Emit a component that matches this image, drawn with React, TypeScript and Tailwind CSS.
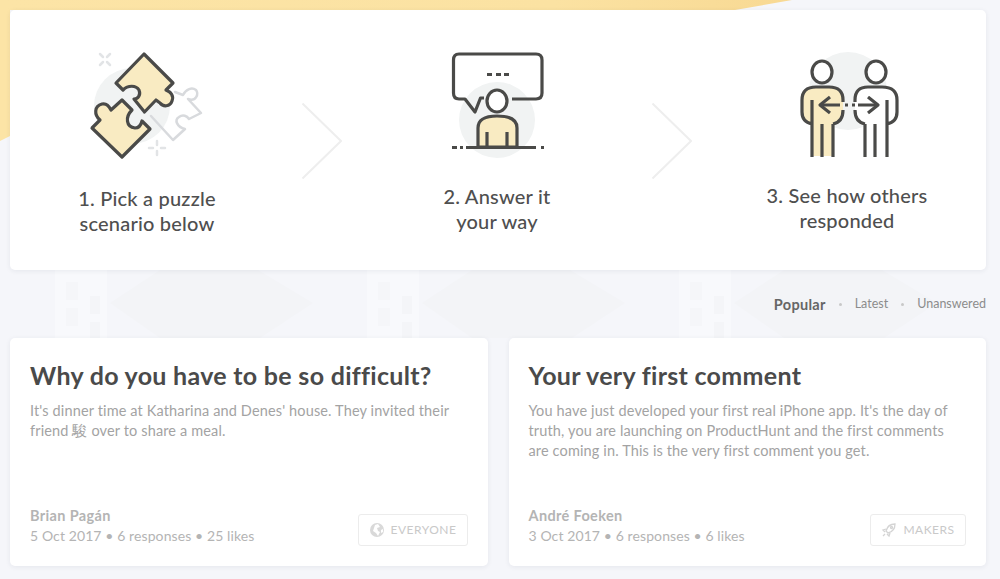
const FONT = "font-['Lato',sans-serif]";
const S = "#4a4a48";

function PageBackdrop() {
  return (
    <svg className="absolute inset-0" width="1000" height="579" viewBox="0 0 1000 579">
      <defs>
        <linearGradient id="sun" x1="0" x2="1" y1="0" y2="0">
          <stop offset="0" stopColor="#fce4a6" />
          <stop offset="0.7" stopColor="#fbe2a2" />
          <stop offset="1" stopColor="#f8d993" />
        </linearGradient>
      </defs>
      {[0, 312, 624].map((x) => (
        <g key={x} transform={`translate(${x} 0)`}>
          <polygon points="110,303 160,270 258,270 313,303 260,338 160,338" fill="#f3f4f7" />
          <rect x="55" y="270" width="52" height="68" fill="#f8f9fc" />
          <rect x="66" y="282" width="12" height="18" fill="#f5f6f9" />
          <rect x="90" y="296" width="10" height="18" fill="#f4f5f8" />
          <rect x="66" y="308" width="12" height="18" fill="#f5f6f9" />
          <rect x="90" y="322" width="10" height="16" fill="#f4f5f8" />
        </g>
      ))}
      <polygon points="0,0 792,0 735,10 10,10 10,136 0,141" fill="url(#sun)" />
    </svg>
  );
}

function PuzzleIcon() {
  return (
    <svg width="130" height="120" viewBox="82 45 130 120" fill="none" strokeLinejoin="round" strokeLinecap="round">
      <circle cx="132" cy="106" r="38" fill="#f1f3f3" />
      <g stroke="#e2e4e6" strokeWidth="2.500">
        <path d="M100 54l3 3M110 54l-3 3M100 65l3-3M110 65l-3-3" />
        <path d="M157 141v4M157 151v4M149 148h4M161 148h4" />
      </g>
      <path
        d="M151 116L173 140L185 129C177 127 174 120 179 117C183 114 187 116 189 119L201 113L188 99C196 102 199 94 196 90C192 87 186 89 183 95L175 92"
        stroke="#d8dadd"
        strokeWidth="2.500"
      />
      <path
        d="M144 54L173 83L166 90C171 92 174 96 172 101C170 107 163 107 160 103L156 100L144.500 112L134 99C138 99 141 95 139 90C136 85 128 85 123 90L116 83Z"
        fill="#f9ebc2"
        stroke={S}
        strokeWidth="3.200"
      />
      <path
        d="M92 128L100 120C94 115 94 106 102 104C106 103 109 106 111 110L122 100L132 110C125 117 126 127 135 128C139 128 141 125 142 121L150 129L122 157Z"
        fill="#f9ebc2"
        stroke={S}
        strokeWidth="3.200"
      />
    </svg>
  );
}

function SpeechIcon() {
  return (
    <svg width="130" height="120" viewBox="432 45 130 120" fill="none" strokeLinejoin="round">
      <circle cx="497" cy="120" r="38" fill="#f1f3f3" />
      <path
        d="M484 98H480.500L475 112L465 99H459Q453.500 99 453.500 93V60Q453.500 54 459 54H536Q542 54 542 60V93Q542 99 536 99H512"
        stroke={S}
        strokeWidth="3.200"
      />
      <rect x="487" y="73" width="5" height="3" fill={S} />
      <rect x="496" y="73" width="5" height="3" fill={S} />
      <rect x="504" y="73" width="5" height="3" fill={S} />
      <ellipse cx="497" cy="101" rx="10" ry="11" fill="#fff" stroke={S} strokeWidth="3.200" />
      <path d="M478 147V128Q478 116 497 116Q517 116 517 128V147Z" fill="#f9ebc2" stroke={S} strokeWidth="3.200" />
      <path d="M487 132V147M507 132V147" stroke={S} strokeWidth="3.200" />
      <path d="M466 147.500H536" stroke={S} strokeWidth="3.200" />
      <path d="M452 147.500H457M460 147.500H463M541 147.500H544" stroke={S} strokeWidth="3.200" />
    </svg>
  );
}

function PeopleIcon() {
  return (
    <svg width="130" height="120" viewBox="782 45 130 120" fill="none" strokeLinejoin="round">
      <circle cx="848" cy="91" r="39" fill="#f1f3f3" />
      <ellipse cx="822" cy="72" rx="10" ry="11" fill="#fff" stroke={S} strokeWidth="3.200" />
      <ellipse cx="876" cy="72" rx="10" ry="11" fill="#fff" stroke={S} strokeWidth="3.200" />
      <path
        d="M812 156V124Q802 122 802 112V100Q802 87 816 87H829Q843 87 843 100V112Q843 122 833 124V156Z"
        fill="#f9ebc2"
      />
      <path
        d="M855 100Q855 87 868 87H882Q897 87 897 100V112Q897 122 887 124V156H865V124Q855 122 855 110Z"
        fill="#fff"
      />
      <path
        d="M812 100V157M833 124V157M822 124V157M812 124Q802 122 802 112V100Q802 87 816 87H829Q843 87 843 100V102M843 110Q843 122 833 124"
        stroke={S}
        strokeWidth="3.200"
      />
      <path
        d="M855 102V100Q855 87 868 87H882Q897 87 897 100V112Q897 122 887 124M855 110Q855 122 865 124M887 100V157M865 124V157M875 124V157"
        stroke={S}
        strokeWidth="3.200"
      />
      <path d="M820 105H840M845 105H848M852 105H855M858 105H877" stroke={S} strokeWidth="3.200" />
      <path d="M830 97L820 105L830 113M868 97L878 105L868 113" stroke={S} strokeWidth="3.200" />
    </svg>
  );
}

function Chevron() {
  return (
    <svg className="mx-[20px] mt-[58px] shrink-0" width="40" height="76" viewBox="0 0 40 76" fill="none">
      <path d="M0.500 0.500L39 38L0.500 75.500" stroke="#eeeeee" strokeWidth="2" />
    </svg>
  );
}

function Step({ icon, line1, line2, top }: { icon: React.ReactNode; line1: string; line2: string; top: string }) {
  return (
    <div className="flex w-[270px] shrink-0 flex-col items-center">
      {icon}
      <div className={`${top} text-center text-[20px] leading-[25px] font-medium tracking-[0.2px] text-[#4f4f4f]`}>
        <div>{line1}</div>
        <div>{line2}</div>
      </div>
    </div>
  );
}

function Globe() {
  return (
    <svg width="16" height="16" viewBox="0 0 16 16">
      <circle cx="8" cy="8" r="7" fill="#d9d9d9" />
      <path d="M6 3l3-1 2 3-3 1 1 3 2 1-2 4-2-3-3-2 1-3zM12 8l2-1 0 3-2 1z" fill="#ffffff" />
    </svg>
  );
}

function Rocket() {
  return (
    <svg width="16" height="16" viewBox="0 0 16 16" fill="none" stroke="#d4d4d4" strokeWidth="1.300">
      <path d="M14 2C9 2 6 5 5 9l2 2c4-1 7-4 7-9z" />
      <path d="M5 7L2 8l2 2M9 11l-1 3-2-2M4 12l-2 2" />
      <circle cx="10.500" cy="5.500" r="1" />
    </svg>
  );
}

function Card({
  title,
  body,
  author,
  meta,
  badge,
  badgeIcon,
  badgeW,
}: {
  title: string;
  body: string;
  author: string;
  meta: string;
  badge: string;
  badgeIcon: React.ReactNode;
  badgeW: string;
}) {
  return (
    <div className="flex h-[228px] flex-col rounded-[5px] bg-white px-[20px] pt-[20px] pb-[20px] shadow-[0_1px_5px_rgba(40,50,80,0.08)]">
      <h2 className="text-[25px] leading-[34px] font-bold tracking-[0.3px] text-[#4a4a4a]">{title}</h2>
      <p className="mt-[9px] text-[14.500px] leading-[20px] tracking-[0.14px] text-[#a3a3a3]">{body}</p>
      <div className="mt-auto flex items-end justify-between">
        <div className="text-[14px] leading-[20px] tracking-[0.1px] text-[#b4b4b4]">
          <div className="text-[14.500px] font-bold tracking-[0.35px]">{author}</div>
          <div>{meta}</div>
        </div>
        <div
          className={`${badgeW} flex h-[32px] items-center justify-center gap-[6px] rounded-[3px] border border-[#ececec] text-[12px] tracking-[0.5px] text-[#c9c9c9]`}
        >
          {badgeIcon}
          <span>{badge}</span>
        </div>
      </div>
    </div>
  );
}

export default function App() {
  return (
    <div className={`${FONT} relative h-[579px] w-[1000px] overflow-hidden bg-[#f5f6fa]`}>
      <PageBackdrop />
      <div className="relative pt-[10px] pr-[14px] pl-[10px]">
        <section className="flex h-[260px] justify-center rounded-[5px] bg-white pt-[35px] pr-[2px] shadow-[0_1px_5px_rgba(40,50,80,0.08)]">
          <Step icon={<PuzzleIcon />} line1="1. Pick a puzzle" line2="scenario below" top="mt-[21px]" />
          <Chevron />
          <Step icon={<SpeechIcon />} line1="2. Answer it" line2="your way" top="mt-[19px]" />
          <Chevron />
          <Step icon={<PeopleIcon />} line1="3. See how others" line2="responded" top="mt-[18px]" />
        </section>
        <nav className="flex h-[68px] items-center justify-end pt-[1px] text-[12.500px] text-[#8c8c8c]">
          <span className="text-[14.500px] font-bold tracking-[0.3px] text-[#666666]">Popular</span>
          <span className="mx-[13px] h-[3px] w-[3px] rounded-full bg-[#c8c8c8]" />
          <span>Latest</span>
          <span className="mx-[13px] h-[3px] w-[3px] rounded-full bg-[#c8c8c8]" />
          <span>Unanswered</span>
        </nav>
        <div className="grid grid-cols-2 gap-[21px]">
          <Card
            title="Why do you have to be so difficult?"
            body="It's dinner time at Katharina and Denes' house. They invited their friend 駿 over to share a meal."
            author="Brian Pagán"
            meta="5 Oct 2017 • 6 responses • 25 likes"
            badge="EVERYONE"
            badgeIcon={<Globe />}
            badgeW="w-[110px]"
          />
          <Card
            title="Your very first comment"
            body="You have just developed your first real iPhone app. It's the day of truth, you are launching on ProductHunt and the first comments are coming in. This is the very first comment you get."
            author="André Foeken"
            meta="3 Oct 2017 • 6 responses • 6 likes"
            badge="MAKERS"
            badgeIcon={<Rocket />}
            badgeW="w-[96px]"
          />
        </div>
      </div>
    </div>
  );
}
